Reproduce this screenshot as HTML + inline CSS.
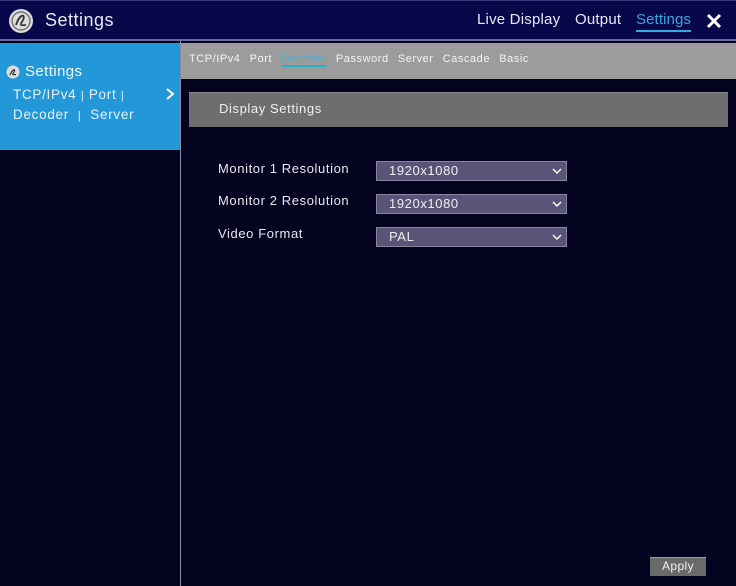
<!DOCTYPE html>
<html><head><style>
*{margin:0;padding:0;box-sizing:border-box}
body{width:736px;height:586px;background:#03021f;font-family:"Liberation Sans",sans-serif;position:relative;overflow:hidden;color:#e8e8f0}
.a{position:absolute}
.hdr{left:0;top:0;width:736px;height:41px;background:#07074a;border-top:1px solid #3a3a7a;border-bottom:2px solid #6a6a9a}
.dd{position:absolute;left:376px;width:191px;height:20px;background:#5a5478;border:1px solid #8a86a0;color:#f0f0f0;font-size:13px;line-height:18px;padding-left:12px;letter-spacing:0.6px}
.dd svg{position:absolute;right:4px;top:6px}
.lbl{position:absolute;left:218px;font-size:13px;color:#e8e8f0;letter-spacing:0.6px}
</style></head><body>
<div class="a hdr"></div>
<svg class="a" style="left:8px;top:8px" width="26" height="26" viewBox="0 0 26 26"><circle cx="13" cy="13" r="12" fill="#ddd"/><circle cx="13" cy="13" r="9" fill="none" stroke="#777" stroke-width="1.5"/><path d="M8 17 C12 5 18 6 15 12 C13 16 10 18 18 17" fill="none" stroke="#333" stroke-width="1.8"/></svg>
<div class="a" style="left:45px;top:10px;font-size:18px;color:#e8e8f8;letter-spacing:0.5px">Settings</div>
<div class="a" style="left:477px;top:11px;font-size:15px;color:#e8e8f8;letter-spacing:0.2px">Live Display</div>
<div class="a" style="left:575px;top:11px;font-size:15px;color:#e8e8f8;letter-spacing:0.2px">Output</div>
<div class="a" style="left:636px;top:11px;font-size:15px;color:#35a8e0;border-bottom:2px solid #35a8e0;padding-bottom:2px;letter-spacing:0.1px">Settings</div>
<svg class="a" style="left:706px;top:13px" width="16" height="16"><path d="M2 2L14 14M14 2L2 14" stroke="#fff" stroke-width="3"/></svg>
<div class="a" style="left:0;top:43px;width:180px;height:107px;background:#2298d8"></div>
<div class="a" style="left:180px;top:41px;width:1px;height:545px;background:#8a8aa8"></div>
<svg class="a" style="left:6px;top:65px" width="14" height="14"><circle cx="7" cy="7" r="6.5" fill="#ddd"/><path d="M4 10C7 3 10 4 8 7C7 9 5 10 10 9.5" fill="none" stroke="#333" stroke-width="1.2"/></svg>
<div class="a" style="left:25px;top:63px;font-size:15px;color:#f4f8ff;letter-spacing:0.4px">Settings</div>
<div class="a" style="left:13px;top:87px;font-size:13.5px;color:#e8f2ff;letter-spacing:0.7px">TCP/IPv4 <span style="font-size:11px">|</span> Port <span style="font-size:11px">|</span></div>
<div class="a" style="left:13px;top:107px;font-size:13.5px;color:#e8f2ff;letter-spacing:0.7px">Decoder &nbsp;<span style="font-size:11px">|</span>&nbsp; Server</div>
<svg class="a" style="left:164px;top:87px" width="12" height="14"><path d="M3 2L9 7L3 12" fill="none" stroke="#fff" stroke-width="2"/></svg>
<div class="a" style="left:181px;top:43px;width:555px;height:36px;background:#9c9c9c"></div>
<div class="a" style="left:189px;top:53px;font-size:11px;color:#f4f4f4;letter-spacing:0.55px;word-spacing:1px">TCP/IPv4&nbsp; Port&nbsp; <span style="color:#4ab0d8;border-bottom:2px solid #28b0c8">Decoder</span>&nbsp; Password&nbsp; Server&nbsp; Cascade&nbsp; Basic</div>
<div class="a" style="left:189px;top:92px;width:539px;height:35px;background:#6e6e6e;border-top:1px solid #888"></div>
<div class="a" style="left:219px;top:101px;font-size:13px;color:#f0f0f0;letter-spacing:0.6px">Display Settings</div>
<div class="lbl" style="top:161px">Monitor 1 Resolution</div>
<div class="lbl" style="top:193px">Monitor 2 Resolution</div>
<div class="lbl" style="top:226px">Video Format</div>
<div class="dd" style="top:161px">1920x1080<svg width="10" height="7"><path d="M1 1L5 5L9 1" fill="none" stroke="#fff" stroke-width="1.5"/></svg></div>
<div class="dd" style="top:194px">1920x1080<svg width="10" height="7"><path d="M1 1L5 5L9 1" fill="none" stroke="#fff" stroke-width="1.5"/></svg></div>
<div class="dd" style="top:227px">PAL<svg width="10" height="7"><path d="M1 1L5 5L9 1" fill="none" stroke="#fff" stroke-width="1.5"/></svg></div>
<div class="a" style="left:650px;top:557px;width:56px;height:19px;background:#6a6a6a;border-top:1px solid #999;color:#f0f0f0;font-size:12px;text-align:center;line-height:17px;letter-spacing:0.4px">Apply</div>
</body></html>
